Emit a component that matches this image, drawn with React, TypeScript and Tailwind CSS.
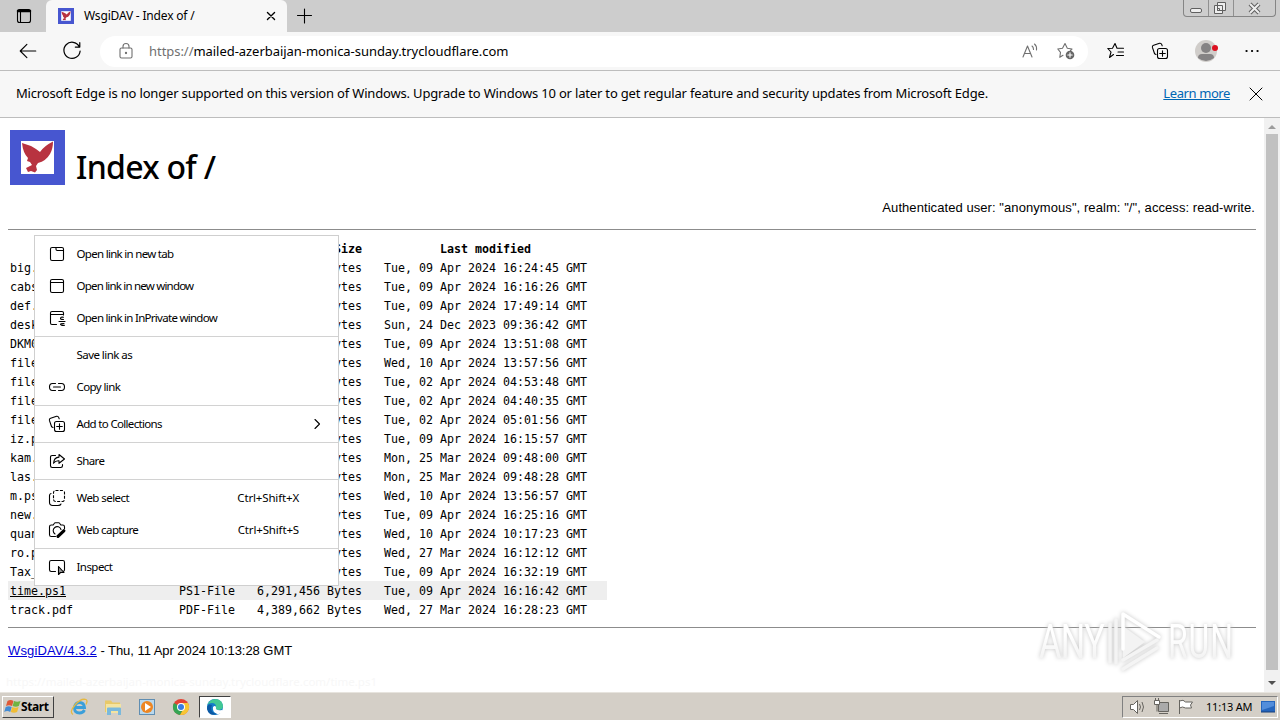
import type { ReactNode } from 'react';

const files = [
  { name: 'big.', size: 'Bytes', date: 'Tue, 09 Apr 2024 16:24:45 GMT' },
  { name: 'cabs', size: 'Bytes', date: 'Tue, 09 Apr 2024 16:16:26 GMT' },
  { name: 'def.', size: 'Bytes', date: 'Tue, 09 Apr 2024 17:49:14 GMT' },
  { name: 'desk', size: 'Bytes', date: 'Sun, 24 Dec 2023 09:36:42 GMT' },
  { name: 'DKM0', size: 'Bytes', date: 'Tue, 09 Apr 2024 13:51:08 GMT' },
  { name: 'file', size: 'Bytes', date: 'Wed, 10 Apr 2024 13:57:56 GMT' },
  { name: 'file', size: 'Bytes', date: 'Tue, 02 Apr 2024 04:53:48 GMT' },
  { name: 'file', size: 'Bytes', date: 'Tue, 02 Apr 2024 04:40:35 GMT' },
  { name: 'file', size: 'Bytes', date: 'Tue, 02 Apr 2024 05:01:56 GMT' },
  { name: 'iz.p', size: 'Bytes', date: 'Tue, 09 Apr 2024 16:15:57 GMT' },
  { name: 'kam.', size: 'Bytes', date: 'Mon, 25 Mar 2024 09:48:00 GMT' },
  { name: 'las.', size: 'Bytes', date: 'Mon, 25 Mar 2024 09:48:28 GMT' },
  { name: 'm.ps', size: 'Bytes', date: 'Wed, 10 Apr 2024 13:56:57 GMT' },
  { name: 'new.', size: 'Bytes', date: 'Tue, 09 Apr 2024 16:25:16 GMT' },
  { name: 'quan', size: 'Bytes', date: 'Wed, 10 Apr 2024 10:17:23 GMT' },
  { name: 'ro.p', size: 'Bytes', date: 'Wed, 27 Mar 2024 16:12:12 GMT' },
  { name: 'Tax_', size: 'Bytes', date: 'Tue, 09 Apr 2024 16:32:19 GMT' },
  { name: 'time.ps1', type: 'PS1-File', size: '6,291,456 Bytes', date: 'Tue, 09 Apr 2024 16:16:42 GMT', active: true },
  { name: 'track.pdf', type: 'PDF-File', size: '4,389,662 Bytes', date: 'Wed, 27 Mar 2024 16:28:23 GMT' },
];

const Icon = ({ children, size = 18, className = '' }: { children?: ReactNode; size?: number; className?: string }) => (
  <svg width={size} height={size} viewBox="0 0 18 18" fill="none" stroke="currentColor" strokeWidth="1.1" strokeLinecap="round" strokeLinejoin="round" className={`shrink-0 ${className}`}>
    {children}
  </svg>
);

const Collections = () => (
  <>
    <path d="M5 12.5 3.6 11.8 1.4 5.4Q1 3.8 2.6 3.2L8.6 1.3Q10.2 1 10.8 2.6L11.2 3.8" />
    <rect x="6.5" y="6.5" width="10" height="10" rx="2" />
    <path d="M11.5 8.7v5.6M8.7 11.5h5.6" />
  </>
);

const Dove = ({ size }: { size: number }) => (
  <svg width={size} height={size} viewBox="0 0 55 55" className="shrink-0">
    <rect width="55" height="55" fill="#4756d0" />
    <rect x="11" y="11" width="33" height="33" fill="#fff" />
    <path d="M12 13Q20 15 26 19L30 22Q34 16 43 11.500Q43 19 40 24Q36 31 28 33L26 36L27 40L25 42.500L21 41L18 42L16 38L22 35L20 32L17 31L18 28Q13 23 12 13Z" fill="#b83340" />
  </svg>
);

const menuGroups = [
  [
    { label: 'Open link in new tab', tracking: 'tracking-[-0.7px]', icon: <><rect x="2.5" y="2.5" width="13" height="13" rx="1.6" /><path d="M8 2.5v1.8q0 1.2 1.2 1.2h6.3" /></> },
    { label: 'Open link in new window', tracking: 'tracking-[-0.8px]', icon: <><rect x="2.5" y="2.5" width="13" height="13" rx="1.6" /><path d="M2.5 5.5h13" /></> },
    { label: 'Open link in InPrivate window', tracking: 'tracking-[-0.72px]', icon: <><path d="M8.5 15.5H4q-1.5 0-1.5-1.5V4q0-1.5 1.5-1.5h10q1.5 0 1.5 1.5v2M2.5 5.5h13" /><path d="M15.500 8.200q-3-.5-3 1.300 0 1 3 1M11 12.500h6M16.500 16.300q-4 .2-4-1 0-.8 3.500-.8" /></> },
  ],
  [
    { label: 'Save link as', tracking: 'tracking-[-0.55px]' },
    { label: 'Copy link', tracking: 'tracking-[-0.6px]', icon: <path d="M7.5 5.5H4.5q-3 0-3 3.500t3 3.500h3M10.500 5.500h3q3 0 3 3.500t-3 3.500h-3M5.500 9h7" /> },
  ],
  [{ label: 'Add to Collections', tracking: 'tracking-[-0.67px]', icon: <Collections />, arrow: true }],
  [{ label: 'Share', tracking: 'tracking-[-0.6px]', icon: <path d="M7.500 3.500H4.200Q2.500 3.500 2.500 5.200v8.600q0 1.700 1.700 1.700h8.600q1.700 0 1.700-1.700V12.500M11 2.500l5.500 4.500L11 11.300V8.800q-3.500-.3-5.500 2.400Q6 5.500 11 5.100Z" /> }],
  [
    { label: 'Web select', tracking: 'tracking-[-0.55px]', shortcut: 'Ctrl+Shift+X', icon: <><rect x="5.500" y="1.500" width="11" height="11" rx="2" strokeLinecap="butt" strokeDasharray="3 1.400" /><path d="M3 4.500q-1.500.4-1.500 2v6.800q0 3.200 3.200 3.200H10q2.500 0 3-1.500" /></> },
    { label: 'Web capture', tracking: 'tracking-[-0.6px]', shortcut: 'Ctrl+Shift+S', icon: <><path d="M7.5 15.5H3.3q-1.8 0-1.8-1.8V5.8Q1.5 4 3.3 4h1.9l1.2-1.8q.3-.5 1-.5h3.200q.7 0 1 .5L12.800 4h1.900q1.800 0 1.800 1.800v2" /><path d="M7 13A4 4 0 1 1 13 8.500" /><path d="M15.800 9.800 10 15.300" strokeWidth="3.200" /></> },
  ],
  [{ label: 'Inspect', tracking: 'tracking-[-0.55px]', icon: <><path d="M7.500 13.500H3.200q-1.700 0-1.700-1.700V4.200q0-1.700 1.700-1.700h11.600q1.700 0 1.700 1.700v7.600q0 1.500-1.300 1.700" /><path d="M10.500 8.500v8l2-2h3.500Z" fill="#999" /></> }],
];

type MenuItem = { label: string; tracking: string; icon?: ReactNode; shortcut?: string; arrow?: boolean };

const ContextMenu = () => (
  <div className="absolute left-[34px] top-[235px] z-20 w-[305px] border border-[#cfcfcf] bg-white py-0.5 font-['Noto_Sans'] text-[11.5px] text-black">
    {menuGroups.map((group, i) => (
      <div key={i}>
        {i > 0 && <div className="flex h-[5px] items-center"><div className="h-px w-full bg-[#d2d2d2]" /></div>}
        {group.map((item: MenuItem) => (
          <div key={item.label} className="flex h-8 items-center whitespace-nowrap pl-[13px]">
            <Icon>{item.icon}</Icon>
            <span className={`ml-[10.5px] ${item.tracking}`}>{item.label}</span>
            {item.shortcut && <span className="ml-auto mr-[39px] tracking-[-0.15px]">{item.shortcut}</span>}
            {item.arrow && <Icon className="ml-auto mr-3"><path d="m7 4.5 4.500 4.500L7 13.500" /></Icon>}
          </div>
        ))}
      </div>
    ))}
  </div>
);

const TitleBar = () => (
  <div className="flex h-8 shrink-0 bg-[#cdcdcd]">
    <div className="flex w-[46px] items-center justify-center rounded-br-md bg-[#cbcbcb] pl-0.5">
      <Icon><rect x="2.5" y="2.5" width="13" height="13" rx="2" /><path d="M3 4h12" strokeWidth="2.5" /><path d="M5.500 5v10" /></Icon>
    </div>
    <div className="flex w-[241px] items-center rounded-t-md bg-[#f7f7f7] pl-3 pr-2">
      <Dove size={16} />
      <span className="ml-2.5 whitespace-nowrap font-['Noto_Sans'] text-[12px] tracking-[-0.18px]">WsgiDAV - Index of /</span>
      <Icon size={16} className="ml-auto"><path d="m5 5 8 8M13 5l-8 8" strokeWidth="1.5" /></Icon>
    </div>
    <Icon className="ml-[9px] mt-[7px]"><path d="M8.500 2v14M1.500 8.500h14" /></Icon>
    <div className="ml-auto mr-1 flex h-[17px] w-[93px] rounded-b border border-t-0 border-[#858585] text-[#606060]">
      <svg width="91" height="16" fill="none" stroke="currentColor">
        <path d="M24.500 0v16M49.500 0v16" stroke="#909090" />
        <rect x="6.500" y="8.500" width="11" height="4" rx="1.500" fill="#eee" />
        <path d="M33.500 2.500h8v8h-8zM30.500 5.500h8v8h-8z" fill="#eee" />
        <path d="M33.500 8.500h2v2h-2z" />
        <path d="m66 4 9 9m0-9-9 9" strokeWidth="4" /><path d="m66 4 9 9m0-9-9 9" stroke="#eee" strokeWidth="2" />
      </svg>
    </div>
  </div>
);

const Toolbar = () => (
  <div className="flex h-[39px] shrink-0 items-center border-b border-[#bdbdbd] bg-[#f7f7f7]">
    <Icon size={20} className="ml-[18px]"><path d="M16 9H2M8 3 2 9l6 6" strokeWidth="1" /></Icon>
    <Icon size={20} className="ml-6"><path d="M15.500 5A7.300 7.300 0 1 0 16.300 9M16 1.500v4h-4" /></Icon>
    <div className="ml-[18px] flex h-[31px] w-[988px] items-center rounded-full bg-white pl-[17px] pr-[13px] text-[#707070]">
      <Icon><rect x="3" y="6" width="12" height="10" rx="1.5" /><path d="M6 6V4.500a3 3 0 0 1 6 0V6" /><circle cx="9" cy="11" r=".6" fill="currentColor" /></Icon>
      <span className="ml-3.5 mt-0.5 whitespace-nowrap font-['Noto_Sans'] text-[13px] tracking-[-0.045px]">https://<span className="text-black">mailed-azerbaijan-monica-sunday.trycloudflare.com</span></span>
      <Icon className="ml-auto"><path d="M2 15 6.500 4l4.500 11M3.500 11.500h6M11 4q1.500 1 1.500 3.500M13.500 2Q16 4 15.500 8" /></Icon>
      <Icon className="ml-[18px]"><path d="m6 13.300-3.200 2 .7-5L.8 7l4.700-.8L8 1.500l2.300 4.700L15 7l-1.500 1.500" /><circle cx="13" cy="13" r="4.300" fill="#666" stroke="none" /><path d="M13 10.800v4.400M10.800 13h4.400" stroke="#fff" /></Icon>
    </div>
    <Icon className="ml-[19px]"><path d="m6.500 12.500-4 3L4 10 .8 6.500l4.700-.3L8 1.500l2 4.700h6.500M11 10h5.500M9.500 13.500h7" /></Icon>
    <Icon className="ml-[26px]"><Collections /></Icon>
    <svg width="24" height="24" className="ml-[26px]"><circle cx="11" cy="12" r="11" fill="#d0cdca" /><circle cx="11" cy="9" r="5" fill="#858384" /><path d="M3 19q0-4 4-4h8q4 0 4 4-8 6-16 0Z" fill="#858384" /><circle cx="20" cy="9" r="3" fill="#dc1020" /></svg>
    <Icon className="ml-6"><path d="M3.500 9h.1M9 9h.1M14.500 9h.1" strokeWidth="2.200" /></Icon>
  </div>
);

const Page = () => (
  <div className="flex min-h-0 grow bg-white">
    <div className="w-[1264px] px-2 pt-3 font-['Liberation_Sans']">
      <div className="flex h-[55px] pl-0.5">
        <Dove size={55} />
        <h1 className="ml-[11px] mt-3.5 whitespace-nowrap font-['Noto_Sans'] text-[32px] font-medium leading-[46px] tracking-[-0.7px]">Index of /</h1>
      </div>
      <p className="mt-[14px] h-[30px] pr-px text-right text-[13px] leading-[18px] tracking-[0.07px]">Authenticated user: "anonymous", realm: "/", access: read-write.</p>
      <div className="h-px bg-[#8c8c8c]" />
      <div className="mt-[9px] w-[599px] whitespace-pre font-['DejaVu_Sans_Mono'] text-[11.63px] leading-[21px]">
        <div className="flex h-[19px] font-bold">
          <span className="w-[354px] text-right">Size</span>
          <span className="ml-[22px] w-[203px] text-center">Last modified</span>
        </div>
        {files.map((file, i) => (
          <div key={i} className={`flex h-[19px] pl-0.5 ${file.active ? 'bg-[#eee]' : ''}`}>
            <span className={`w-[169px] ${file.active ? 'underline' : ''}`}>{file.name}</span>
            <span className="w-[70px]">{file.type}</span>
            <span className="w-[113px] text-right">{file.size}</span>
            <span className="ml-[22px]">{file.date}</span>
          </div>
        ))}
      </div>
      <div className="mt-2 h-px bg-[#8c8c8c]" />
      <p className="mt-[14px] whitespace-nowrap text-[13px] leading-[18px] tracking-[-0.05px]">
        <span className="tracking-[0.13px] text-[#0000d8] underline">WsgiDAV/4.3.2</span> - Thu, 11 Apr 2024 10:13:28 GMT
      </p>
    </div>
    <div className="flex w-4 flex-col items-center bg-[#f1f1f1]">
      <svg width="16" height="16"><path d="m4 11 4-4 4 4Z" fill="#9c9c9c" /></svg>
      <div className="w-3 grow bg-[#c1c1c1]" />
      <svg width="16" height="22"><path d="m4 11 4 4 4-4Z" fill="#505050" /></svg>
    </div>
  </div>
);

const Watermark = () => (
  <svg width="250" height="86" className="absolute left-[1030px] top-[602px] z-10 drop-shadow-[0_0_2px_#c4c4c4]">
    <defs>
      <linearGradient id="fade" x1="0" y1="0" x2="0" y2="1">
        <stop offset="0.4" stopColor="#fff" />
        <stop offset="0.9" stopColor="#f0f0f0" />
      </linearGradient>
    </defs>
    <g fill="url(#fade)" fontFamily="Roboto" fontSize="49">
      <text transform="translate(9 56) scale(.7 1)" textLength="94">ANY</text>
      <text transform="translate(138 56) scale(.65 1)" textLength="100">RUN</text>
    </g>
    <g fill="none" stroke="#fff" strokeWidth="3.5" strokeLinejoin="round" strokeLinecap="round">
      <path d="M93 24v32l22-16Z" fill="#f3f3f3" stroke="none" />
      <path d="M93 47V12l36 23" />
      <path d="M93 58l34-20M86 18v43M80 22v38M93 67l34-21" stroke="#f4f4f4" />
    </g>
  </svg>
);

const Taskbar = () => (
  <div className="flex h-7 shrink-0 items-center border-t border-[#e7e4de] bg-[#d4cfc7]">
    <div className="ml-0.5 flex h-[22px] w-[52px] items-center border border-b-[#404040] border-l-white border-r-[#404040] border-t-white pl-px">
      <svg width="17" height="17" viewBox="0 0 16 17" className="shrink-0"><path d="M3 3q3-2 6 0L7.500 8q-3-1.500-6 0Z" fill="#df5936" /><path d="M9.600 3q3 1.500 6.400 0l-1.700 5q-3 1.500-6.200 0Z" fill="#70b341" /><path d="M1.200 9q3-1.500 6 0l-1.500 5q-3-2-6 0Z" fill="#438bd3" /><path d="M7.800 9q3 1.500 6.300 0l-1.500 5q-3 1.500-6.400 0Z" fill="#f1bd34" /></svg>
      <span className="whitespace-nowrap font-['Noto_Sans'] text-[12px] font-bold tracking-[-0.4px]">Start</span>
    </div>
    <svg width="18" height="18" viewBox="0 0 18 18" className="ml-4" fill="none"><path d="M4.500 9.500h10Q14 4.500 9.500 4.500T4.500 10q0 5 5 5 3.500 0 5-3" stroke="#3a9fda" strokeWidth="2.800" /><path d="M3 16.500Q-1 14 5 7T16 1.500q2 1 0 5" stroke="#e6b940" strokeWidth="1.300" /></svg>
    <svg width="18" height="18" viewBox="0 0 18 18" className="ml-4"><path d="M1 2.500h6l1.500 2H16V14H1Z" fill="#e8c968" /><path d="M2 6h15v9H2Z" fill="#f4e4a0" /><path d="M4 9.500h12q1 0 1 1V17h-3v-4H7v4H3v-6.500q0-1 1-1Z" fill="#7ab9dc" /></svg>
    <svg width="18" height="18" viewBox="0 0 18 18" className="ml-4"><rect x="1.500" y="1.500" width="15" height="15" fill="#b9d8ed" stroke="#608eb2" /><circle cx="9" cy="9" r="6" fill="#ed8623" /><path d="m7 5 6 4-6 4Z" fill="#fff" /></svg>
    <svg width="18" height="18" viewBox="0 0 18 18" className="ml-4"><circle cx="9" cy="9" r="8" fill="#e44334" /><path d="M9 9 2 5a8 8 0 0 0 6 12l4-7Z" fill="#35a554" /><path d="M9 9V5h7a8 8 0 0 1-8 12l4-7Z" fill="#f7c634" /><circle cx="9" cy="9" r="4" fill="#fff" /><circle cx="9" cy="9" r="3" fill="#397de3" /></svg>
    <div className="ml-[9px] flex h-[22px] w-8 items-center justify-center border border-b-white border-l-[#404040] border-r-white border-t-[#404040] bg-white">
      <svg width="18" height="18" viewBox="0 0 18 18"><circle cx="9" cy="9" r="8" fill="#157cc9" /><path d="M1 8Q3 1 10 1q6.500 1 7 7 0 4-5 4-3-.5-2-3 0-4-4-4-4 0-5 3Z" fill="#42c894" /><path d="M10 9q-1 4 6 3l1 1q-3 4-6 3-5-2-4-7 2-2 3 0Z" fill="#fff" /><path d="M6 7q-3 7 5 9-8 3-10-5Q1 5 6 7Z" fill="#0c59a4" /></svg>
    </div>
    <div className="ml-auto mr-0.5 flex h-[22px] w-[156px] items-center border border-b-white border-l-[#808080] border-r-white border-t-[#808080] pl-1.5">
      <svg width="66" height="18" fill="#fff" stroke="#66645f" className="shrink-0">
        <path d="M1.500 6.500h3l4-4v13l-4-4h-3Z" /><path d="M10.500 6q2 3 0 6M13 4q3 5 0 10" fill="none" />
        <path d="M29.500 4.500h10v9h-10z" fill="#aaa" /><path d="M25.500 2.500h5v4h-5zM28 6.500v7M30 15.500h9" /><path d="M26.500 0v2M29.500 0v2" />
        <path d="M50.500 2v14M50.500 3q4-2 6 1h7l-2 3 1 3h-6q-3-2-6 0" />
      </svg>
      <span className="ml-[11px] mt-px whitespace-nowrap font-['Noto_Sans'] text-[11px] tracking-[-0.2px]">11:13 AM</span>
      <svg width="16" height="14" className="ml-auto mr-px shrink-0"><path d="M1 1h14v11H1Z" fill="#2565bd" /><path d="M2 2h12v4L2 10Z" fill="#528ddb" /><path d="M1 12h14" stroke="#173e79" /></svg>
    </div>
  </div>
);

const App = () => (
  <div className="relative flex h-[720px] w-[1280px] flex-col overflow-hidden bg-[#f7f7f7] text-black">
    <TitleBar />
    <Toolbar />
    <div className="flex h-[47px] shrink-0 items-center whitespace-nowrap border-b border-[#bdbdbd] px-4 font-['Noto_Sans'] text-[13px]">
      <span className="tracking-[-0.175px]">Microsoft Edge is no longer supported on this version of Windows. Upgrade to Windows 10 or later to get regular feature and security updates from Microsoft Edge.</span>
      <span className="ml-auto tracking-[-0.4px] text-[#0066b4] underline">Learn more</span>
      <Icon className="ml-[17px] -mr-px"><path d="m3 3 12 12M15 3 3 15" strokeWidth="1" /></Icon>
    </div>
    <Page />
    <ContextMenu />
    <Watermark />
    <span className="absolute left-1.5 top-[674px] whitespace-nowrap font-['Noto_Sans'] text-[11.5px] leading-4 text-[#f7f7f7]">https://mailed-azerbaijan-monica-sunday.trycloudflare.com/time.ps1</span>
    <Taskbar />
  </div>
);

export default App;
